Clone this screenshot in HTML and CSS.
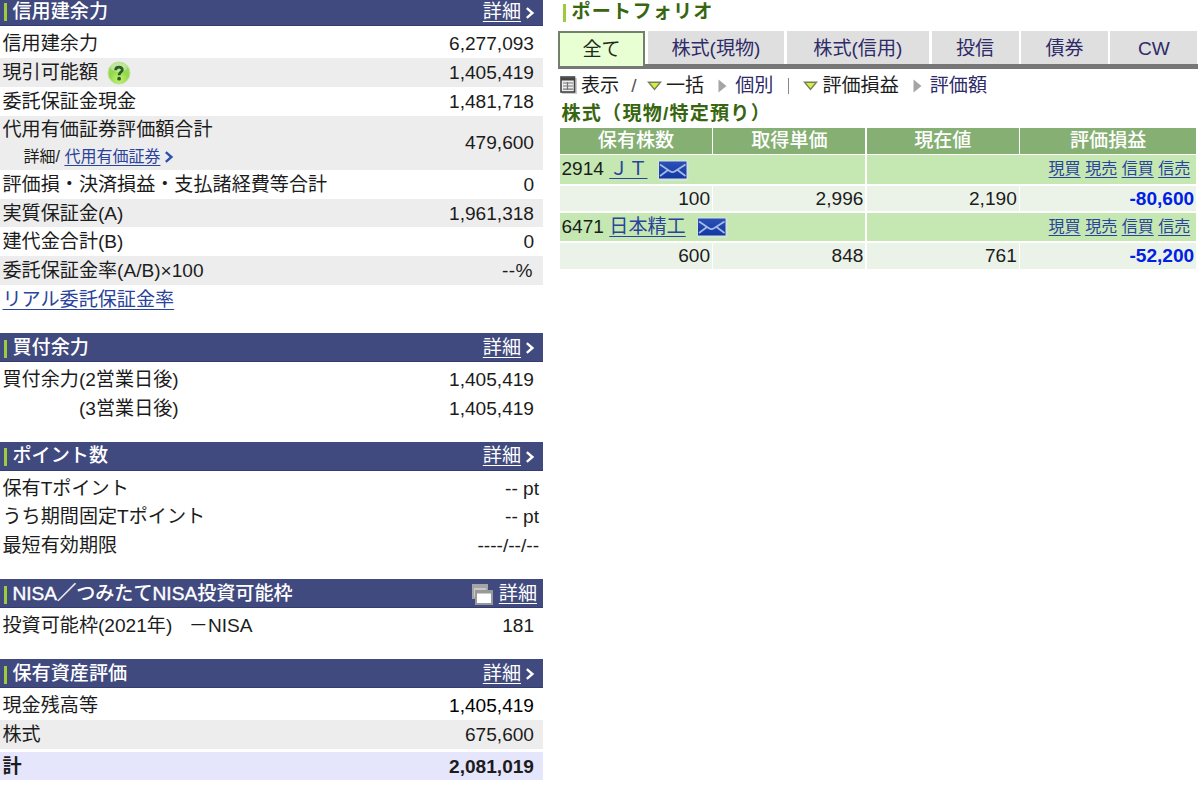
FILE: index.html
```
<!DOCTYPE html>
<html lang="ja">
<head>
<meta charset="utf-8">
<title>口座管理</title>
<link rel="stylesheet" href="styles.css">
</head>
<body>
<svg class="defs" width="0" height="0" aria-hidden="true">
  <defs>
    <linearGradient id="blue" x1="0" y1="0" x2="0" y2="1"><stop offset="0" stop-color="#2c50b4"/><stop offset="1" stop-color="#1238a2"/></linearGradient>
    <radialGradient id="lime" cx=".5" cy=".8" r=".8"><stop offset="0" stop-color="#c2f56c"/><stop offset=".55" stop-color="#93d64c"/><stop offset="1" stop-color="#a5da72"/></radialGradient>
    <symbol id="chev" viewBox="0 0 10 12"><path d="M1.800 1.200 7.400 6 1.800 10.800" fill="none" stroke="currentColor" stroke-width="2.400"/></symbol>
    <symbol id="mail" viewBox="0 0 32 24">
      <rect x="1" y="2" width="30.500" height="21" rx="2" fill="#d3e2da"/>
      <rect x="2" y="3.500" width="27.500" height="17" fill="url(#blue)"/>
      <path d="M3 6.500 13 13.200Q15.500 15 18 13.200L28.500 6.500M3 18 11 12M28.500 18 20.500 12" fill="none" stroke="#a3bbe8" stroke-width="1.700"/>
    </symbol>
    <symbol id="down" viewBox="0 0 15 10"><path d="M1.500 1.200H13.500L7.500 8.500Z" fill="#d7ee3c" stroke="#777c62" stroke-width="1.400"/></symbol>
    <symbol id="right" viewBox="0 0 9 14"><path d="M.5.5 8.500 7 .5 13.500Z" fill="#a5a5a5"/></symbol>
  </defs>
</svg>
<div class="page">
  <main class="account">
    <section class="panel first">
      <h2 class="bar"><span class="mark"></span><span class="name">信用建余力</span><a class="more">詳細</a><svg class="chev"><use href="#chev"/></svg></h2>
      <div class="rows">
        <div class="row"><span>信用建余力</span><span>6,277,093</span></div>
        <div class="row gray"><span class="with-help">現引可能額<svg class="help" viewBox="0 0 24 24"><circle cx="12" cy="12" r="11" fill="url(#lime)" stroke="#c0e39b"/><ellipse cx="12" cy="6.500" rx="8" ry="4.500" fill="#fff" opacity=".35"/><path d="M8.600 9.300C8.800 5 15.500 5.300 15.300 9 15.200 11 12.200 11.300 12.100 14.200" fill="none" stroke="#285c28" stroke-width="2.800"/><circle cx="12.100" cy="17.700" r="1.900" fill="#285c28"/></svg></span><span>1,405,419</span></div>
        <div class="row"><span>委託保証金現金</span><span>1,481,718</span></div>
        <div class="row gray tall"><span>代用有価証券評価額合計<small>詳細/ <a class="link">代用有価証券</a><svg class="chev blue"><use href="#chev"/></svg></small></span><span>479,600</span></div>
        <div class="row"><span>評価損・決済損益・支払諸経費等合計</span><span>0</span></div>
        <div class="row gray"><span>実質保証金(A)</span><span>1,961,318</span></div>
        <div class="row"><span>建代金合計(B)</span><span>0</span></div>
        <div class="row gray"><span>委託保証金率(A/B)×100</span><span class="rate">--%</span></div>
        <div class="row"><a class="link">リアル委託保証金率</a></div>
      </div>
    </section>
    <section class="panel">
      <h2 class="bar"><span class="mark"></span><span class="name">買付余力</span><a class="more">詳細</a><svg class="chev"><use href="#chev"/></svg></h2>
      <div class="rows">
        <div class="row"><span>買付余力(2営業日後)</span><span>1,405,419</span></div>
        <div class="row"><span class="sub">(3営業日後)</span><span>1,405,419</span></div>
      </div>
    </section>
    <section class="panel">
      <h2 class="bar"><span class="mark"></span><span class="name">ポイント数</span><a class="more">詳細</a><svg class="chev"><use href="#chev"/></svg></h2>
      <div class="rows points">
        <div class="row"><span>保有Tポイント</span><span>-- pt</span></div>
        <div class="row"><span>うち期間固定Tポイント</span><span>-- pt</span></div>
        <div class="row"><span>最短有効期限</span><span>----/--/--</span></div>
      </div>
    </section>
    <section class="panel">
      <h2 class="bar external"><span class="mark"></span><span class="name"><span class="latin">NISA／</span>つみたて<span class="latin">NISA</span>投資可能枠</span><svg class="windows" viewBox="0 0 23 23"><rect x="1" y="1" width="16" height="15" fill="#a5a5a5"/><rect x="3" y="5" width="12" height="9" fill="#c8c8c8"/><rect x="4" y="7" width="18" height="15" fill="#999"/><rect x="6" y="10.500" width="14" height="9.500" fill="#fff"/></svg><a class="more">詳細</a></h2>
      <div class="rows">
        <div class="row"><span>投資可能枠(2021年)<span class="gap">　</span>－NISA</span><span>181</span></div>
      </div>
    </section>
    <section class="panel">
      <h2 class="bar"><span class="mark"></span><span class="name">保有資産評価</span><a class="more">詳細</a><svg class="chev"><use href="#chev"/></svg></h2>
      <div class="rows">
        <div class="row"><span>現金残高等</span><span class="strong-ink">1,405,419</span></div>
        <div class="row gray"><span>株式</span><span>675,600</span></div>
        <div class="row total"><span>計</span><span>2,081,019</span></div>
      </div>
    </section>
  </main>
  <aside class="portfolio">
    <h2 class="title"><span class="mark"></span>ポートフォリオ</h2>
    <nav class="tabs"><a class="tab active">全て</a><a class="tab">株式(現物)</a><a class="tab">株式(信用)</a><a class="tab">投信</a><a class="tab">債券</a><a class="tab">CW</a></nav>
    <div class="tools">
      <svg class="grid-icon" viewBox="0 0 17 18"><rect x="2" y="2" width="15" height="16" fill="#ccc"/><rect x="1" y="1" width="13.500" height="15" fill="#eee" stroke="#444" stroke-width="1.600"/><path d="M1 3H14.500" stroke="#444" stroke-width="3"/><path d="M3 7H13M3 10H13M3 13.200H13M7.500 6V14" stroke="#777" stroke-width="1.200"/></svg>
      <span class="show">表示</span><span class="slash">/</span>
      <svg class="down"><use href="#down"/></svg><span class="all">一括</span>
      <svg class="right"><use href="#right"/></svg><a class="each">個別</a><span class="sep"></span>
      <svg class="down"><use href="#down"/></svg><span class="gain">評価損益</span>
      <svg class="right"><use href="#right"/></svg><a>評価額</a>
    </div>
    <h3 class="group">株式（現物/特定預り）</h3>
    <div class="holdings">
      <div class="th">保有株数</div><div class="th">取得単価</div><div class="th">現在値</div><div class="th">評価損益</div>
      <div class="stock">2914 <a class="link">ＪＴ</a><svg class="mail"><use href="#mail"/></svg></div>
      <div class="orders"><a class="link">現買</a><a class="link">現売</a><a class="link">信買</a><a class="link">信売</a></div>
      <div class="td">100</div><div class="td">2,996</div><div class="td">2,190</div><div class="td loss">-80,600</div>
      <div class="stock">6471 <a class="link">日本精工</a><svg class="mail"><use href="#mail"/></svg></div>
      <div class="orders"><a class="link">現買</a><a class="link">現売</a><a class="link">信買</a><a class="link">信売</a></div>
      <div class="td">600</div><div class="td">848</div><div class="td">761</div><div class="td loss">-52,200</div>
    </div>
  </aside>
</div>
</body>
</html>
```
FILE: styles.css
```
* { box-sizing: border-box; }
body {
  margin: 0;
  background: #fff;
  color: #1c1c1c;
  font: 19.1px/28px "Liberation Sans", "Noto Sans CJK JP", sans-serif;
  overflow: hidden;
}
h2, h3 { margin: 0; font-size: inherit; font-weight: 500; }
svg { flex: none; }
.defs { position: absolute; }
.page { display: flex; height: 785px; }
.account { width: 543px; flex: none; }
.panel { margin-bottom: 19.3px; }
.bar {
  display: flex;
  align-items: center;
  height: 28.8px;
  padding: 1.500px 8px 0 4px;
  background: #414a7f;
  color: #fff;
  border-bottom: 1px solid #353d70;
}
.first .bar { height: 26.2px; padding: 0 8px .5px 4px; }
.mark { width: 2.500px; height: 18px; margin: 2px 6px 0 0; background: #9ccb3c; flex: none; }
.first .mark { margin-top: 0; }
.name { flex: 1; white-space: pre; }
.latin { -webkit-text-stroke: .4px currentColor; }
.more, .link { text-decoration: underline; text-decoration-thickness: 1.300px; text-decoration-skip-ink: none; text-underline-offset: 2.500px; }
.more { font-weight: 400; }
.link { color: #2a439c; }
.chev { width: 10px; height: 12px; margin-left: 4px; }
.bar .chev { margin-top: 1px; }
.chev.blue { color: #2a52ae; }
.external { padding-right: 6px; }
.windows { width: 23px; height: 23px; margin: 1px 5px 0 0; }
.rows { padding-top: 3px; }
.row {
  display: flex;
  justify-content: space-between;
  align-items: center;
  height: 28.8px;
  padding: 1.200px 9px 0 2.500px;
  white-space: pre;
}
.points .row { padding-right: 4px; }
.gray { background: #ededed; }
.tall { height: 54.2px; padding-top: 0; }
.row small { display: flex; align-items: center; padding-left: 21px; font-size: 16px; line-height: 25px; }
.with-help { display: flex; align-items: center; }
.help { width: 24px; height: 24px; margin-left: 9px; }
.sub { padding-left: 76.500px; }
.rate { margin-right: 1px; letter-spacing: .4px; }
.gap { font-size: 16.6px; }
.strong-ink { color: #000; }
.total { margin-top: 3px; background: #e5e5fb; font-weight: 700; }
.portfolio { width: 640px; margin-left: 15px; }
.title {
  display: flex;
  align-items: center;
  height: 31px;
  padding: 0 0 7px 5px;
  color: #37660f;
  font-weight: 700;
  letter-spacing: 1.200px;
}
.title .mark { margin-top: 1px; }
.tabs {
  display: grid;
  grid-template-columns: 87px 136.500px 142px 87px 86.500px 87px;
  column-gap: 2.700px;
  height: 38px;
  border-bottom: 5px solid #777;
}
.tab { height: 33px; background: #dfdfdf; color: #2e2b68; text-align: center; line-height: 35px; }
.active { height: 35px; line-height: 34px; background: #e7ffd3; color: #1c2b1c; border: 2px solid #73806a; border-bottom: 0; }
.tools { display: flex; align-items: center; height: 33px; padding: 1px 0 0 2px; white-space: nowrap; }
.tools a { color: #2e2b68; }
.grid-icon { width: 17px; height: 18px; margin: -2px 4px 0 0; }
.slash { margin: 0 10px 0 12px; color: #555; }
.down { width: 15px; height: 10px; margin-right: 4.500px; }
.right { width: 9px; height: 14px; margin: 0 8px 0 14px; }
.sep { width: 1px; height: 16px; margin: 0 14px 0 14.500px; background: #888; }
.group { height: 26px; padding-left: 3.500px; line-height: 24px; color: #37660f; font-weight: 700; letter-spacing: 1.200px; }
.holdings {
  display: grid;
  grid-template-columns: 152px 152px 152px 176px;
  grid-template-rows: 25.500px 28.700px 25.500px 28px 25.500px;
  gap: 1.900px 1.400px;
  margin-left: 2px;
}
.th { line-height: 25px; background: #86b073; color: #fff; text-align: center; font-weight: 500; }
.td { padding-right: 2px; line-height: 25px; background: #ebf3e9; text-align: right; }
.loss { color: #0020e6; font-weight: 700; }
.stock, .orders { grid-column: span 2; display: flex; align-items: center; padding-bottom: 1px; background: #c5e8b2; white-space: pre; }
.stock { padding-left: 1.500px; }
.mail { width: 32px; height: 24px; margin: 1px 0 0 10px; }
.orders { justify-content: flex-end; gap: 4.500px; padding-right: 6px; font-size: 16px; }
```
